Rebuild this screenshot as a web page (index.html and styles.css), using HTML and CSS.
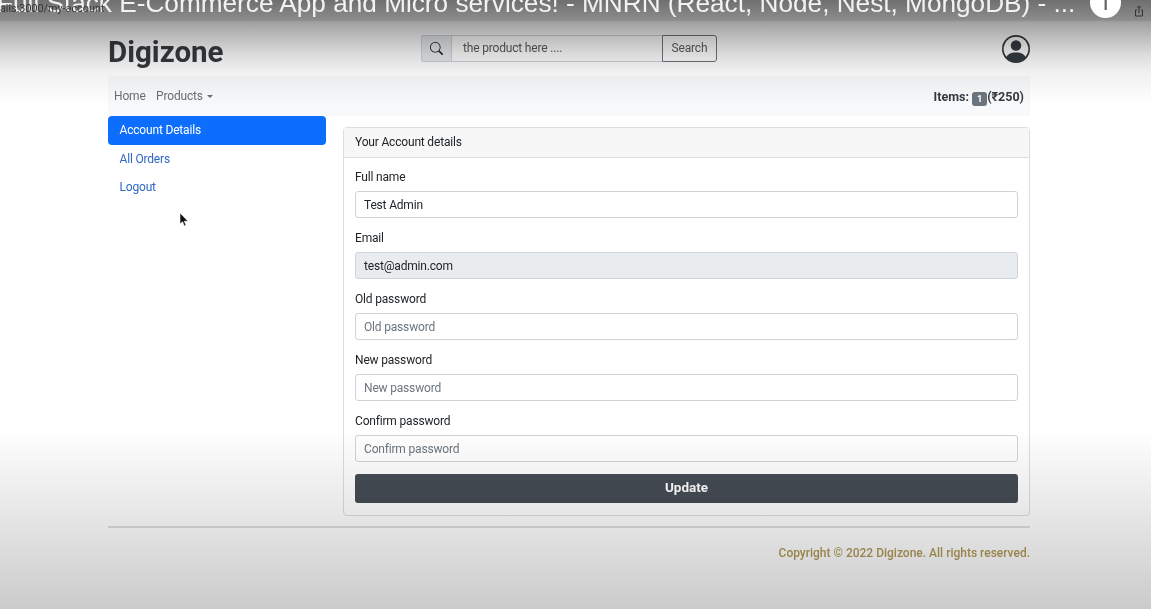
FILE: index.html
```html
<!DOCTYPE html>
<html lang="en">
<head>
    <meta charset="UTF-8">
    <title>Digizone</title>
    <link rel="stylesheet" href="styles.css">
</head>
<body>
    <div class="page">
        <!-- Logo, arama, kullanici -->
        <header class="top-row">
            <div class="logo">Digizone</div>
            <form class="search-group">
                <span class="search-icon">
                    <svg width="13" height="13" viewBox="0 0 16 16" fill="currentColor"><path d="M11.742 10.344a6.5 6.5 0 1 0-1.397 1.398h-.001c.03.04.062.078.098.115l3.85 3.85a1 1 0 0 0 1.415-1.414l-3.85-3.85a1.007 1.007 0 0 0-.115-.1zM12 6.5a5.5 5.5 0 1 1-11 0 5.5 5.5 0 0 1 11 0z"/></svg>
                </span>
                <input class="search-input" type="text" placeholder="the product here ....">
                <button class="search-btn" type="button">Search</button>
            </form>
            <svg class="avatar" width="28" height="28" viewBox="0 0 16 16" fill="#343a40"><path d="M11 6a3 3 0 1 1-6 0 3 3 0 0 1 6 0z"/><path fill-rule="evenodd" d="M0 8a8 8 0 1 1 16 0A8 8 0 0 1 0 8zm8-7a7 7 0 0 0-5.468 11.37C3.242 11.226 4.805 10 8 10s4.757 1.225 5.468 2.37A7 7 0 0 0 8 1z"/></svg>
        </header>

        <nav class="navbar">
            <div class="nav-links">
                <a href="#">Home</a>
                <a href="#" class="dropdown">Products</a>
            </div>
            <div class="cart"><b>Items:</b> <span class="badge">1</span><b>(₹250)</b></div>
        </nav>

        <div class="content">
            <aside class="side-menu">
                <a href="#" class="active">Account Details</a>
                <a href="#">All Orders</a>
                <a href="#">Logout</a>
            </aside>

            <section class="card">
                <div class="card-header">Your Account details</div>
                <form class="card-body">
                    <label>Full name</label>
                    <input type="text" value="Test Admin">
                    <label>Email</label>
                    <input type="text" value="test@admin.com" disabled>
                    <label>Old password</label>
                    <input type="password" placeholder="Old password">
                    <label>New password</label>
                    <input type="password" placeholder="New password">
                    <label>Confirm password</label>
                    <input type="password" placeholder="Confirm password">
                    <button type="button" class="update-btn">Update</button>
                </form>
            </section>
        </div>

        <hr class="divider">
        <footer class="footer">Copyright © 2022 Digizone. All rights reserved.</footer>
    </div>

    <!-- Video oynatici katmani -->
    <div class="shade-top"></div>
    <div class="shade-bottom"></div>
    <div class="video-title">Full Stack E-Commerce App and Micro services! - MNRN (React, Node, Nest, MongoDB) - ...</div>
    <div class="status-url">ails:3000/my-account</div>
    <div class="channel-icon">T</div>
    <svg class="share-icon" width="10" height="12" viewBox="0 0 10 12" fill="none" stroke="#333" stroke-width="1"><path d="M3 5H1.5v6h7V5H7M5 8V1M3.2 2.6 5 1l1.8 1.6"/></svg>
    <svg class="cursor" width="10" height="15" viewBox="0 0 10 15"><path d="M1 1v11l2.6-2.3L5.3 14l1.7-.8-1.7-4H9z" fill="#111" stroke="#fff" stroke-width=".6"/></svg>
</body>
</html>
```

FILE: styles.css
```css
* {
    box-sizing: border-box;
}

html, body {
    height: 609px;
}

body {
    margin: 0;
    overflow: hidden;
    position: relative;
    background: #fff;
    color: #212529;
    font-family: 'Roboto', 'Liberation Sans', sans-serif;
    font-size: 12px;
    letter-spacing: -0.18px;
    line-height: 19px;
}

.page {
    width: 922px;
    margin-left: 108px;
    padding-top: 35px;
}

/* Ust satir */
.top-row {
    display: flex;
    align-items: flex-start;
    justify-content: space-between;
    height: 28px;
}

.logo {
    width: 313px;
    font-size: 29.5px;
    font-weight: 700;
    letter-spacing: 0;
    color: #343a40;
    line-height: 35px;
}

.search-group {
    display: flex;
    width: 296px;
    height: 27px;
    margin-right: auto;
}

.search-icon {
    width: 30px;
    display: flex;
    align-items: center;
    justify-content: center;
    background: #e9ecef;
    border: 1px solid #ced4da;
    border-right: none;
    border-radius: 3px 0 0 3px;
    color: #212529;
}

.search-input {
    flex: 1;
    min-width: 0;
    padding: 0 11px;
    font: inherit;
    letter-spacing: inherit;
    background: transparent;
    border: 1px solid #ced4da;
    border-right: none;
    outline: none;
}

.search-input::placeholder {
    color: #555b61;
}

.search-btn {
    width: 55px;
    padding: 0;
    font: inherit;
    letter-spacing: inherit;
    color: #5a6066;
    background: transparent;
    border: 1px solid #6c757d;
    border-radius: 0 3px 3px 0;
}

/* Menu */
.navbar {
    display: flex;
    align-items: center;
    justify-content: space-between;
    height: 40px;
    margin-top: 13px;
    padding: 0 6px;
    background: #f8f9fa;
}

.nav-links {
    display: flex;
    gap: 10.5px;
}

.nav-links a {
    color: #6c6f73;
    text-decoration: none;
}

.dropdown::after {
    content: "";
    display: inline-block;
    margin-left: 4px;
    vertical-align: 2px;
    border-top: 3.5px solid;
    border-left: 3.5px solid transparent;
    border-right: 3.5px solid transparent;
}

.cart {
    font-size: 12.5px;
    letter-spacing: 0;
    color: #343a40;
}

.badge {
    display: inline-block;
    width: 15px;
    height: 14px;
    font-size: 9.5px;
    font-weight: 700;
    line-height: 14px;
    text-align: center;
    vertical-align: -1px;
    color: #fff;
    background: #6c757d;
    border-radius: 3px;
}

/* Icerik */
.content {
    display: flex;
    gap: 17px;
}

.side-menu {
    width: 218px;
    display: flex;
    flex-direction: column;
}

.side-menu a {
    height: 28.5px;
    padding: 5px 11.5px;
    color: #2f68c4;
    text-decoration: none;
    border-radius: 4px;
}

.side-menu a.active {
    color: #fff;
    background: #0d6efd;
}

.card {
    flex: 1;
    margin-top: 11px;
    height: 389px;
    border: 1px solid #dcdddf;
    border-radius: 4px;
}

.card-header {
    height: 30px;
    padding: 5px 11px;
    background: #f7f7f7;
    border-bottom: 1px solid #dcdddf;
}

.card-body {
    display: flex;
    flex-direction: column;
    padding: 10px 11px;
}

.card-body label {
    height: 23px;
}

.card-body input {
    height: 27px;
    margin-bottom: 11px;
    padding: 0 8px;
    font: inherit;
    letter-spacing: inherit;
    color: #212529;
    background: transparent;
    border: 1px solid #ced4da;
    border-radius: 3px;
    outline: none;
}

.card-body input::placeholder {
    color: #6c757d;
}

.card-body input:disabled {
    background: #e9ecef;
    opacity: 1;
}

.update-btn {
    height: 29px;
    margin-top: 1px;
    padding: 0 0 2px;
    font: inherit;
    font-size: 13.5px;
    font-weight: 700;
    letter-spacing: 0;
    color: #fff;
    background: #454c54;
    border: none;
    border-radius: 3px;
}

.divider {
    height: 2px;
    margin: 10px 0 0;
    background: #e0e0e0;
    border: none;
}

.footer {
    margin-top: 16px;
    text-align: right;
    font-size: 12px;
    font-weight: 500;
    letter-spacing: 0;
    color: #b09a58;
}

/* Oynatici katmani */
.shade-top {
    position: absolute;
    top: 0;
    left: 0;
    right: 0;
    height: 106px;
    background: linear-gradient(#6f6f6f 0, #8c8c8c 20px, #a0a0a0 22px, #b0b0b0 30px, #dcdcdc 55px, #f0f0f0 72px, #ffffff 105px);
    mix-blend-mode: multiply;
    pointer-events: none;
}

.shade-bottom {
    position: absolute;
    left: 0;
    right: 0;
    bottom: 0;
    height: 180px;
    background: linear-gradient(#ffffff, #cbcbcb);
    mix-blend-mode: multiply;
    pointer-events: none;
}

.video-title {
    position: absolute;
    top: -13px;
    left: -3px;
    font-family: 'Liberation Sans', sans-serif;
    font-size: 26.2px;
    letter-spacing: 0;
    line-height: 32px;
    color: #f2f2f2;
    white-space: nowrap;
}

.status-url {
    position: absolute;
    top: 1px;
    left: 0;
    font-size: 10.8px;
    letter-spacing: 0;
    line-height: 16px;
    color: #333;
}

.channel-icon {
    position: absolute;
    top: -13px;
    left: 1090px;
    width: 31px;
    height: 31px;
    font-size: 24px;
    line-height: 31px;
    text-align: center;
    color: #666;
    background: #fff;
    border-radius: 50%;
}

.share-icon {
    position: absolute;
    top: 5px;
    left: 1134px;
}

.cursor {
    position: absolute;
    top: 212px;
    left: 179px;
}
```
